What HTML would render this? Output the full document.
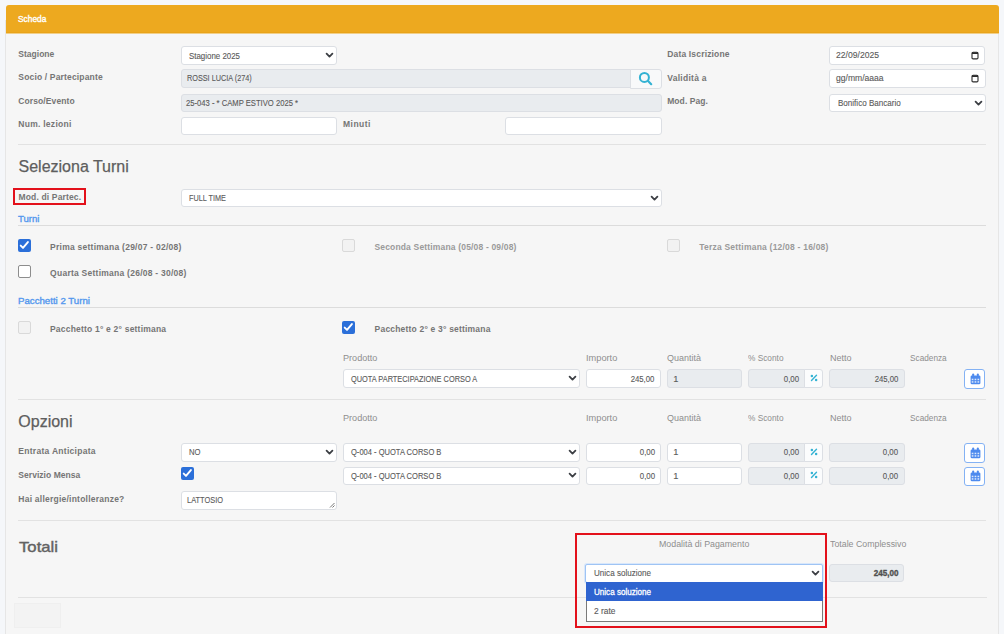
<!DOCTYPE html>
<html><head><meta charset="utf-8"><style>
html,body{margin:0;padding:0;width:1004px;height:634px;overflow:hidden;background:#f5f7fa;font-family:'Liberation Sans', sans-serif;}
</style></head><body>
<div style="position:absolute;left:5px;top:20px;width:994px;height:681px;background:#f6f6f6;border:1px solid #e6e6e6;border-radius:0;box-sizing:border-box;"></div>
<div style="position:absolute;left:6px;top:5px;width:993px;height:28px;background:#eda91f;border-radius:3px 3px 0 0"></div>
<div style="position:absolute;left:6px;top:32px;width:993px;height:1px;background:#e9a31a;border-radius:0;box-sizing:border-box;"></div>
<div style="position:absolute;left:6px;top:33px;width:993px;height:1px;background:#f1cf88;border-radius:0;box-sizing:border-box;"></div>
<div style="position:absolute;left:181px;top:46px;width:156px;height:19px;background:#fff;border:1px solid #dcdfe4;border-radius:3px;box-sizing:border-box;"></div>
<svg style="position:absolute;left:325.0px;top:51.9px" width="9" height="7" viewBox="0 0 9 7"><path d="M1.6 1.7 L4.5 4.6 L7.4 1.7" fill="none" stroke="#3b3e43" stroke-width="1.8" stroke-linecap="round" stroke-linejoin="round"/></svg>
<div style="position:absolute;left:829px;top:46px;width:156px;height:19px;background:#fff;border:1px solid #dcdfe4;border-radius:3px;box-sizing:border-box;"></div>
<svg style="position:absolute;left:970.8px;top:50.8px" width="8" height="9" viewBox="0 0 8 9"><rect x="1" y="1.3" width="6" height="6.6" rx="1.1" fill="none" stroke="#2a2a2a" stroke-width="1.1"/><rect x="1" y="1.3" width="6" height="1.7" fill="#2a2a2a"/></svg>
<div style="position:absolute;left:181px;top:69px;width:451px;height:19px;background:#e9ecef;border:1px solid #dcdfe4;border-radius:3px 0 0 3px;box-sizing:border-box;"></div>
<div style="position:absolute;left:630px;top:69px;width:32px;height:20px;background:#f8f9fa;border:1px solid #dcdfe4;border-radius:0 3px 3px 0;box-sizing:border-box;"></div>
<svg style="position:absolute;left:637px;top:70px" width="18" height="18" viewBox="0 0 18 18"><circle cx="7.4" cy="7.4" r="4.5" fill="none" stroke="#33b2d3" stroke-width="2"/><path d="M10.8 10.8 L14.2 14.2" stroke="#33b2d3" stroke-width="2.2" stroke-linecap="round"/></svg>
<div style="position:absolute;left:829px;top:69px;width:157px;height:19px;background:#fff;border:1px solid #dcdfe4;border-radius:3px;box-sizing:border-box;"></div>
<svg style="position:absolute;left:970.8px;top:73.8px" width="8" height="9" viewBox="0 0 8 9"><rect x="1" y="1.3" width="6" height="6.6" rx="1.1" fill="none" stroke="#2a2a2a" stroke-width="1.1"/><rect x="1" y="1.3" width="6" height="1.7" fill="#2a2a2a"/></svg>
<div style="position:absolute;left:181px;top:94px;width:481px;height:18px;background:#e9ecef;border:1px solid #dcdfe4;border-radius:3px;box-sizing:border-box;"></div>
<div style="position:absolute;left:829px;top:94px;width:157px;height:18px;background:#fff;border:1px solid #dcdfe4;border-radius:3px;box-sizing:border-box;"></div>
<svg style="position:absolute;left:974.0px;top:99.7px" width="9" height="7" viewBox="0 0 9 7"><path d="M1.6 1.7 L4.5 4.6 L7.4 1.7" fill="none" stroke="#3b3e43" stroke-width="1.8" stroke-linecap="round" stroke-linejoin="round"/></svg>
<div style="position:absolute;left:181px;top:117px;width:156px;height:18px;background:#fff;border:1px solid #dcdfe4;border-radius:3px;box-sizing:border-box;"></div>
<div style="position:absolute;left:505px;top:117px;width:157px;height:18px;background:#fff;border:1px solid #dcdfe4;border-radius:3px;box-sizing:border-box;"></div>
<div style="position:absolute;left:18px;top:144px;width:968px;height:1px;background:#e2e2e2;border-radius:0;box-sizing:border-box;"></div>
<div style="position:absolute;left:181px;top:189px;width:481px;height:18px;background:#fff;border:1px solid #dcdfe4;border-radius:3px;box-sizing:border-box;"></div>
<svg style="position:absolute;left:649.7px;top:194.5px" width="9" height="7" viewBox="0 0 9 7"><path d="M1.6 1.7 L4.5 4.6 L7.4 1.7" fill="none" stroke="#3b3e43" stroke-width="1.8" stroke-linecap="round" stroke-linejoin="round"/></svg>
<div style="position:absolute;left:18px;top:225px;width:968px;height:1px;background:#dcdcdc;border-radius:0;box-sizing:border-box;"></div>
<div style="position:absolute;left:18px;top:239px;width:13px;height:13px;background:#2b6fd9;border-radius:2px"></div><svg style="position:absolute;left:18px;top:239px" width="13" height="13" viewBox="0 0 13 13"><path d="M2.7 6.6 L5 8.9 L9.9 3.1" fill="none" stroke="#fff" stroke-width="1.9" stroke-linecap="round" stroke-linejoin="round"/></svg>
<div style="position:absolute;left:342px;top:239px;width:13px;height:13px;background:#f2f2f2;border:1px solid #d9d9d9;border-radius:2px;box-sizing:border-box;"></div>
<div style="position:absolute;left:667px;top:239px;width:13px;height:13px;background:#f2f2f2;border:1px solid #d9d9d9;border-radius:2px;box-sizing:border-box;"></div>
<div style="position:absolute;left:18px;top:265px;width:13px;height:13px;background:#fff;border:1px solid #8d8d8d;border-radius:2px;box-sizing:border-box;"></div>
<div style="position:absolute;left:18px;top:307px;width:968px;height:1px;background:#dcdcdc;border-radius:0;box-sizing:border-box;"></div>
<div style="position:absolute;left:18px;top:321px;width:13px;height:13px;background:#f2f2f2;border:1px solid #d9d9d9;border-radius:2px;box-sizing:border-box;"></div>
<div style="position:absolute;left:342px;top:321px;width:13px;height:13px;background:#2b6fd9;border-radius:2px"></div><svg style="position:absolute;left:342px;top:321px" width="13" height="13" viewBox="0 0 13 13"><path d="M2.7 6.6 L5 8.9 L9.9 3.1" fill="none" stroke="#fff" stroke-width="1.9" stroke-linecap="round" stroke-linejoin="round"/></svg>
<div style="position:absolute;left:343px;top:369px;width:237px;height:19px;background:#fff;border:1px solid #dcdfe4;border-radius:3px;box-sizing:border-box;"></div>
<svg style="position:absolute;left:568.1px;top:374.9px" width="9" height="7" viewBox="0 0 9 7"><path d="M1.6 1.7 L4.5 4.6 L7.4 1.7" fill="none" stroke="#3b3e43" stroke-width="1.8" stroke-linecap="round" stroke-linejoin="round"/></svg>
<div style="position:absolute;left:586px;top:369px;width:75px;height:19px;background:#fff;border:1px solid #dcdfe4;border-radius:3px;box-sizing:border-box;"></div>
<div style="position:absolute;left:667px;top:369px;width:75px;height:19px;background:#e9ecef;border:1px solid #dcdfe4;border-radius:3px;box-sizing:border-box;"></div>
<div style="position:absolute;left:748px;top:369px;width:58px;height:19px;background:#e9ecef;border:1px solid #dcdfe4;border-radius:3px 0 0 3px;box-sizing:border-box;"></div>
<div style="position:absolute;left:804px;top:369px;width:19px;height:19px;background:#fbfcfd;border:1px solid #dcdfe4;border-radius:0 3px 3px 0;box-sizing:border-box;"></div>
<svg style="position:absolute;left:809.8px;top:373.7px" width="8" height="8" viewBox="0 0 8 8"><circle cx="1.9" cy="1.9" r="1.25" fill="#33b2d3"/><circle cx="6.1" cy="6.1" r="1.25" fill="#33b2d3"/><path d="M6.5 1.3 L1.5 6.6" stroke="#33b2d3" stroke-width="1.4" stroke-linecap="round"/></svg>
<div style="position:absolute;left:829px;top:369px;width:76px;height:19px;background:#e9ecef;border:1px solid #dcdfe4;border-radius:3px;box-sizing:border-box;"></div>
<div style="position:absolute;left:964px;top:369px;width:21px;height:20px;background:#fff;border:1.7px solid #84b2f4;border-radius:3px;box-sizing:border-box;"></div>
<svg style="position:absolute;left:969.8px;top:372.8px" width="11" height="12" viewBox="0 0 11 12"><rect x="0.6" y="2.4" width="9.8" height="8.9" rx="1.4" fill="#4d8aee"/><rect x="2.2" y="0.4" width="1.9" height="3.4" rx="0.9" fill="#4d8aee"/><rect x="6.9" y="0.4" width="1.9" height="3.4" rx="0.9" fill="#4d8aee"/><rect x="1.7" y="5.7" width="1.7" height="1.5" fill="#dce8fc"/><rect x="1.7" y="8.2" width="1.7" height="1.5" fill="#dce8fc"/><rect x="4.6" y="5.7" width="1.7" height="1.5" fill="#dce8fc"/><rect x="4.6" y="8.2" width="1.7" height="1.5" fill="#dce8fc"/><rect x="7.5" y="5.7" width="1.7" height="1.5" fill="#dce8fc"/><rect x="7.5" y="8.2" width="1.7" height="1.5" fill="#dce8fc"/></svg>
<div style="position:absolute;left:18px;top:399px;width:968px;height:1px;background:#e2e2e2;border-radius:0;box-sizing:border-box;"></div>
<div style="position:absolute;left:181px;top:443px;width:156px;height:19px;background:#fff;border:1px solid #dcdfe4;border-radius:3px;box-sizing:border-box;"></div>
<svg style="position:absolute;left:324.8px;top:449.1px" width="9" height="7" viewBox="0 0 9 7"><path d="M1.6 1.7 L4.5 4.6 L7.4 1.7" fill="none" stroke="#3b3e43" stroke-width="1.8" stroke-linecap="round" stroke-linejoin="round"/></svg>
<div style="position:absolute;left:181px;top:467px;width:13px;height:13px;background:#2b6fd9;border-radius:2px"></div><svg style="position:absolute;left:181px;top:467px" width="13" height="13" viewBox="0 0 13 13"><path d="M2.7 6.6 L5 8.9 L9.9 3.1" fill="none" stroke="#fff" stroke-width="1.9" stroke-linecap="round" stroke-linejoin="round"/></svg>
<div style="position:absolute;left:181px;top:491px;width:156px;height:19px;background:#fff;border:1px solid #dcdfe4;border-radius:3px;box-sizing:border-box;"></div>
<svg style="position:absolute;left:328px;top:501px" width="8" height="8" viewBox="0 0 8 8"><path d="M6.5 2 L2 6.5 M6.5 4.5 L4.5 6.5" stroke="#666" stroke-width="0.9"/></svg>
<div style="position:absolute;left:343px;top:443px;width:237px;height:19px;background:#fff;border:1px solid #dcdfe4;border-radius:3px;box-sizing:border-box;"></div>
<svg style="position:absolute;left:568.1px;top:448.9px" width="9" height="7" viewBox="0 0 9 7"><path d="M1.6 1.7 L4.5 4.6 L7.4 1.7" fill="none" stroke="#3b3e43" stroke-width="1.8" stroke-linecap="round" stroke-linejoin="round"/></svg>
<div style="position:absolute;left:586px;top:443px;width:75px;height:19px;background:#fff;border:1px solid #dcdfe4;border-radius:3px;box-sizing:border-box;"></div>
<div style="position:absolute;left:667px;top:443px;width:75px;height:19px;background:#fff;border:1px solid #dcdfe4;border-radius:3px;box-sizing:border-box;"></div>
<div style="position:absolute;left:748px;top:443px;width:58px;height:19px;background:#e9ecef;border:1px solid #dcdfe4;border-radius:3px 0 0 3px;box-sizing:border-box;"></div>
<div style="position:absolute;left:804px;top:443px;width:19px;height:19px;background:#fbfcfd;border:1px solid #dcdfe4;border-radius:0 3px 3px 0;box-sizing:border-box;"></div>
<svg style="position:absolute;left:809.8px;top:447.7px" width="8" height="8" viewBox="0 0 8 8"><circle cx="1.9" cy="1.9" r="1.25" fill="#33b2d3"/><circle cx="6.1" cy="6.1" r="1.25" fill="#33b2d3"/><path d="M6.5 1.3 L1.5 6.6" stroke="#33b2d3" stroke-width="1.4" stroke-linecap="round"/></svg>
<div style="position:absolute;left:829px;top:443px;width:76px;height:19px;background:#e9ecef;border:1px solid #dcdfe4;border-radius:3px;box-sizing:border-box;"></div>
<div style="position:absolute;left:964px;top:443px;width:21px;height:20px;background:#fff;border:1.7px solid #84b2f4;border-radius:3px;box-sizing:border-box;"></div>
<svg style="position:absolute;left:969.8px;top:446.8px" width="11" height="12" viewBox="0 0 11 12"><rect x="0.6" y="2.4" width="9.8" height="8.9" rx="1.4" fill="#4d8aee"/><rect x="2.2" y="0.4" width="1.9" height="3.4" rx="0.9" fill="#4d8aee"/><rect x="6.9" y="0.4" width="1.9" height="3.4" rx="0.9" fill="#4d8aee"/><rect x="1.7" y="5.7" width="1.7" height="1.5" fill="#dce8fc"/><rect x="1.7" y="8.2" width="1.7" height="1.5" fill="#dce8fc"/><rect x="4.6" y="5.7" width="1.7" height="1.5" fill="#dce8fc"/><rect x="4.6" y="8.2" width="1.7" height="1.5" fill="#dce8fc"/><rect x="7.5" y="5.7" width="1.7" height="1.5" fill="#dce8fc"/><rect x="7.5" y="8.2" width="1.7" height="1.5" fill="#dce8fc"/></svg>
<div style="position:absolute;left:343px;top:467px;width:237px;height:18px;background:#fff;border:1px solid #dcdfe4;border-radius:3px;box-sizing:border-box;"></div>
<svg style="position:absolute;left:568.1px;top:472.4px" width="9" height="7" viewBox="0 0 9 7"><path d="M1.6 1.7 L4.5 4.6 L7.4 1.7" fill="none" stroke="#3b3e43" stroke-width="1.8" stroke-linecap="round" stroke-linejoin="round"/></svg>
<div style="position:absolute;left:586px;top:467px;width:75px;height:18px;background:#fff;border:1px solid #dcdfe4;border-radius:3px;box-sizing:border-box;"></div>
<div style="position:absolute;left:667px;top:467px;width:75px;height:18px;background:#fff;border:1px solid #dcdfe4;border-radius:3px;box-sizing:border-box;"></div>
<div style="position:absolute;left:748px;top:467px;width:58px;height:18px;background:#e9ecef;border:1px solid #dcdfe4;border-radius:3px 0 0 3px;box-sizing:border-box;"></div>
<div style="position:absolute;left:804px;top:467px;width:19px;height:18px;background:#fbfcfd;border:1px solid #dcdfe4;border-radius:0 3px 3px 0;box-sizing:border-box;"></div>
<svg style="position:absolute;left:809.8px;top:471.2px" width="8" height="8" viewBox="0 0 8 8"><circle cx="1.9" cy="1.9" r="1.25" fill="#33b2d3"/><circle cx="6.1" cy="6.1" r="1.25" fill="#33b2d3"/><path d="M6.5 1.3 L1.5 6.6" stroke="#33b2d3" stroke-width="1.4" stroke-linecap="round"/></svg>
<div style="position:absolute;left:829px;top:467px;width:76px;height:18px;background:#e9ecef;border:1px solid #dcdfe4;border-radius:3px;box-sizing:border-box;"></div>
<div style="position:absolute;left:964px;top:467px;width:21px;height:19px;background:#fff;border:1.7px solid #84b2f4;border-radius:3px;box-sizing:border-box;"></div>
<svg style="position:absolute;left:969.8px;top:470.3px" width="11" height="12" viewBox="0 0 11 12"><rect x="0.6" y="2.4" width="9.8" height="8.9" rx="1.4" fill="#4d8aee"/><rect x="2.2" y="0.4" width="1.9" height="3.4" rx="0.9" fill="#4d8aee"/><rect x="6.9" y="0.4" width="1.9" height="3.4" rx="0.9" fill="#4d8aee"/><rect x="1.7" y="5.7" width="1.7" height="1.5" fill="#dce8fc"/><rect x="1.7" y="8.2" width="1.7" height="1.5" fill="#dce8fc"/><rect x="4.6" y="5.7" width="1.7" height="1.5" fill="#dce8fc"/><rect x="4.6" y="8.2" width="1.7" height="1.5" fill="#dce8fc"/><rect x="7.5" y="5.7" width="1.7" height="1.5" fill="#dce8fc"/><rect x="7.5" y="8.2" width="1.7" height="1.5" fill="#dce8fc"/></svg>
<div style="position:absolute;left:18px;top:520px;width:968px;height:1px;background:#e2e2e2;border-radius:0;box-sizing:border-box;"></div>
<div style="position:absolute;left:18px;top:597px;width:969px;height:1px;background:#e2e2e2;border-radius:0;box-sizing:border-box;"></div>
<div style="position:absolute;left:585px;top:564px;width:238px;height:19px;background:#fff;border:1px solid #9fc4f4;border-radius:2px;box-sizing:border-box;box-shadow:0 0 0 1px #d8e7fb;"></div>
<svg style="position:absolute;left:811.0px;top:570.0px" width="9" height="7" viewBox="0 0 9 7"><path d="M1.6 1.7 L4.5 4.6 L7.4 1.7" fill="none" stroke="#3b3e43" stroke-width="1.8" stroke-linecap="round" stroke-linejoin="round"/></svg>
<div style="position:absolute;left:586px;top:582px;width:237px;height:40px;background:#fff;border:1px solid #7a7a7a;border-radius:0;box-sizing:border-box;border-top:none;"></div>
<div style="position:absolute;left:586px;top:582px;width:237px;height:19px;background:#2f64d0;border-radius:0;box-sizing:border-box;"></div>
<div style="position:absolute;left:829px;top:564px;width:75px;height:18px;background:#e9ecef;border:1px solid #dcdfe4;border-radius:3px;box-sizing:border-box;"></div>
<div style="position:absolute;left:14px;top:603px;width:47px;height:25px;background:#f3f3f3;border:1px solid #efefef;border-radius:0;box-sizing:border-box;"></div>
<div style="position:absolute;left:18.00px;top:14.80px;font-size:8.5px;line-height:8.5px;font-weight:normal;color:#fff;white-space:nowrap;-webkit-text-stroke:0.35px #fff;transform:scaleX(0.9846);transform-origin:0 0;">Scheda</div>
<div style="position:absolute;left:18.30px;top:49.80px;font-size:8.5px;line-height:8.5px;font-weight:bold;color:#757575;white-space:nowrap;letter-spacing:0.013px;">Stagione</div>
<div style="position:absolute;left:18.30px;top:73.30px;font-size:8.5px;line-height:8.5px;font-weight:bold;color:#757575;white-space:nowrap;letter-spacing:0.166px;">Socio / Partecipante</div>
<div style="position:absolute;left:18.30px;top:97.20px;font-size:8.5px;line-height:8.5px;font-weight:bold;color:#757575;white-space:nowrap;letter-spacing:0.103px;">Corso/Evento</div>
<div style="position:absolute;left:18.30px;top:120.20px;font-size:8.5px;line-height:8.5px;font-weight:bold;color:#757575;white-space:nowrap;letter-spacing:0.267px;">Num. lezioni</div>
<div style="position:absolute;left:343.00px;top:120.20px;font-size:8.5px;line-height:8.5px;font-weight:bold;color:#757575;white-space:nowrap;letter-spacing:0.474px;">Minuti</div>
<div style="position:absolute;left:667.20px;top:49.80px;font-size:8.5px;line-height:8.5px;font-weight:bold;color:#757575;white-space:nowrap;letter-spacing:0.171px;">Data Iscrizione</div>
<div style="position:absolute;left:667.20px;top:73.70px;font-size:8.5px;line-height:8.5px;font-weight:bold;color:#757575;white-space:nowrap;letter-spacing:0.282px;">Validità a</div>
<div style="position:absolute;left:667.20px;top:97.30px;font-size:8.5px;line-height:8.5px;font-weight:bold;color:#757575;white-space:nowrap;letter-spacing:0.082px;">Mod. Pag.</div>
<div style="position:absolute;left:188.80px;top:51.93px;font-size:9.3px;line-height:9.3px;font-weight:normal;color:#5a5a5a;white-space:nowrap;-webkit-text-stroke:0.12px #5a5a5a;transform:scaleX(0.8504);transform-origin:0 0;">Stagione 2025</div>
<div style="position:absolute;left:836.00px;top:51.23px;font-size:9.3px;line-height:9.3px;font-weight:normal;color:#5a5a5a;white-space:nowrap;-webkit-text-stroke:0.12px #5a5a5a;transform:scaleX(0.9241);transform-origin:0 0;">22/09/2025</div>
<div style="position:absolute;left:186.50px;top:74.43px;font-size:9.3px;line-height:9.3px;font-weight:normal;color:#5a5a5a;white-space:nowrap;-webkit-text-stroke:0.12px #5a5a5a;transform:scaleX(0.7826);transform-origin:0 0;">ROSSI LUCIA (274)</div>
<div style="position:absolute;left:836.00px;top:74.23px;font-size:9.3px;line-height:9.3px;font-weight:normal;color:#5a5a5a;white-space:nowrap;-webkit-text-stroke:0.12px #5a5a5a;transform:scaleX(0.9209);transform-origin:0 0;">gg/mm/aaaa</div>
<div style="position:absolute;left:186.40px;top:98.93px;font-size:9.3px;line-height:9.3px;font-weight:normal;color:#5a5a5a;white-space:nowrap;-webkit-text-stroke:0.12px #5a5a5a;transform:scaleX(0.8220);transform-origin:0 0;">25-043 - * CAMP ESTIVO 2025 *</div>
<div style="position:absolute;left:838.00px;top:98.93px;font-size:9.3px;line-height:9.3px;font-weight:normal;color:#5a5a5a;white-space:nowrap;-webkit-text-stroke:0.12px #5a5a5a;transform:scaleX(0.8665);transform-origin:0 0;">Bonifico Bancario</div>
<div style="position:absolute;left:18.50px;top:159.45px;font-size:16px;line-height:16px;font-weight:normal;color:#5e5e5e;white-space:nowrap;-webkit-text-stroke:0.25px #5e5e5e;">Seleziona Turni</div>
<div style="position:absolute;left:18.50px;top:193.00px;font-size:8.5px;line-height:8.5px;font-weight:bold;color:#757575;white-space:nowrap;letter-spacing:0.152px;">Mod. di Partec.</div>
<div style="position:absolute;left:188.90px;top:193.93px;font-size:9.3px;line-height:9.3px;font-weight:normal;color:#5a5a5a;white-space:nowrap;-webkit-text-stroke:0.12px #5a5a5a;transform:scaleX(0.7870);transform-origin:0 0;">FULL TIME</div>
<div style="position:absolute;left:18.40px;top:214.98px;font-size:9px;line-height:9px;font-weight:normal;color:#5598ee;white-space:nowrap;-webkit-text-stroke:0.35px #5598ee;transform:scaleX(1.0658);transform-origin:0 0;">Turni</div>
<div style="position:absolute;left:50.10px;top:242.70px;font-size:8.5px;line-height:8.5px;font-weight:bold;color:#757575;white-space:nowrap;letter-spacing:0.247px;">Prima settimana (29/07 - 02/08)</div>
<div style="position:absolute;left:374.40px;top:242.70px;font-size:8.5px;line-height:8.5px;font-weight:bold;color:#9a9a9a;white-space:nowrap;letter-spacing:0.171px;">Seconda Settimana (05/08 - 09/08)</div>
<div style="position:absolute;left:699.20px;top:242.70px;font-size:8.5px;line-height:8.5px;font-weight:bold;color:#9a9a9a;white-space:nowrap;letter-spacing:0.217px;">Terza Settimana (12/08 - 16/08)</div>
<div style="position:absolute;left:50.10px;top:268.80px;font-size:8.5px;line-height:8.5px;font-weight:bold;color:#757575;white-space:nowrap;letter-spacing:0.251px;">Quarta Settimana (26/08 - 30/08)</div>
<div style="position:absolute;left:18.40px;top:296.68px;font-size:9px;line-height:9px;font-weight:normal;color:#5598ee;white-space:nowrap;-webkit-text-stroke:0.35px #5598ee;transform:scaleX(1.0739);transform-origin:0 0;">Pacchetti 2 Turni</div>
<div style="position:absolute;left:50.00px;top:324.80px;font-size:8.5px;line-height:8.5px;font-weight:bold;color:#757575;white-space:nowrap;letter-spacing:0.203px;">Pacchetto 1° e 2° settimana</div>
<div style="position:absolute;left:374.60px;top:324.80px;font-size:8.5px;line-height:8.5px;font-weight:bold;color:#757575;white-space:nowrap;letter-spacing:0.195px;">Pacchetto 2° e 3° settimana</div>
<div style="position:absolute;left:343.10px;top:353.80px;font-size:8.5px;line-height:8.5px;font-weight:normal;color:#8e8e8e;white-space:nowrap;transform:scaleX(1.0703);transform-origin:0 0;">Prodotto</div>
<div style="position:absolute;left:586.30px;top:353.80px;font-size:8.5px;line-height:8.5px;font-weight:normal;color:#8e8e8e;white-space:nowrap;transform:scaleX(1.0857);transform-origin:0 0;">Importo</div>
<div style="position:absolute;left:667.30px;top:353.80px;font-size:8.5px;line-height:8.5px;font-weight:normal;color:#8e8e8e;white-space:nowrap;transform:scaleX(1.0579);transform-origin:0 0;">Quantità</div>
<div style="position:absolute;left:748.40px;top:353.80px;font-size:8.5px;line-height:8.5px;font-weight:normal;color:#8e8e8e;white-space:nowrap;transform:scaleX(0.9755);transform-origin:0 0;">% Sconto</div>
<div style="position:absolute;left:829.60px;top:353.80px;font-size:8.5px;line-height:8.5px;font-weight:normal;color:#8e8e8e;white-space:nowrap;transform:scaleX(1.0626);transform-origin:0 0;">Netto</div>
<div style="position:absolute;left:910.40px;top:353.80px;font-size:8.5px;line-height:8.5px;font-weight:normal;color:#8e8e8e;white-space:nowrap;transform:scaleX(0.9706);transform-origin:0 0;">Scadenza</div>
<div style="position:absolute;left:350.90px;top:374.93px;font-size:9.3px;line-height:9.3px;font-weight:normal;color:#5a5a5a;white-space:nowrap;-webkit-text-stroke:0.12px #5a5a5a;transform:scaleX(0.7940);transform-origin:0 0;">QUOTA PARTECIPAZIONE CORSO A</div>
<div style="position:absolute;left:626.46px;top:374.93px;font-size:9.3px;line-height:9.3px;font-weight:normal;color:#5a5a5a;white-space:nowrap;-webkit-text-stroke:0.12px #5a5a5a;transform:scaleX(0.8369);transform-origin:100% 0;">245,00</div>
<div style="position:absolute;left:673.20px;top:374.93px;font-size:9.3px;line-height:9.3px;font-weight:normal;color:#5a5a5a;white-space:nowrap;-webkit-text-stroke:0.12px #5a5a5a;">1</div>
<div style="position:absolute;left:781.09px;top:374.93px;font-size:9.3px;line-height:9.3px;font-weight:normal;color:#5a5a5a;white-space:nowrap;-webkit-text-stroke:0.12px #5a5a5a;transform:scaleX(0.8449);transform-origin:100% 0;">0,00</div>
<div style="position:absolute;left:869.66px;top:374.93px;font-size:9.3px;line-height:9.3px;font-weight:normal;color:#5a5a5a;white-space:nowrap;-webkit-text-stroke:0.12px #5a5a5a;transform:scaleX(0.8369);transform-origin:100% 0;">245,00</div>
<div style="position:absolute;left:18.30px;top:414.45px;font-size:16px;line-height:16px;font-weight:normal;color:#5e5e5e;white-space:nowrap;-webkit-text-stroke:0.25px #5e5e5e;">Opzioni</div>
<div style="position:absolute;left:343.10px;top:414.30px;font-size:8.5px;line-height:8.5px;font-weight:normal;color:#8e8e8e;white-space:nowrap;transform:scaleX(1.0703);transform-origin:0 0;">Prodotto</div>
<div style="position:absolute;left:586.30px;top:414.30px;font-size:8.5px;line-height:8.5px;font-weight:normal;color:#8e8e8e;white-space:nowrap;transform:scaleX(1.0857);transform-origin:0 0;">Importo</div>
<div style="position:absolute;left:667.30px;top:414.30px;font-size:8.5px;line-height:8.5px;font-weight:normal;color:#8e8e8e;white-space:nowrap;transform:scaleX(1.0579);transform-origin:0 0;">Quantità</div>
<div style="position:absolute;left:748.40px;top:414.30px;font-size:8.5px;line-height:8.5px;font-weight:normal;color:#8e8e8e;white-space:nowrap;transform:scaleX(0.9755);transform-origin:0 0;">% Sconto</div>
<div style="position:absolute;left:829.60px;top:414.30px;font-size:8.5px;line-height:8.5px;font-weight:normal;color:#8e8e8e;white-space:nowrap;transform:scaleX(1.0626);transform-origin:0 0;">Netto</div>
<div style="position:absolute;left:910.40px;top:414.30px;font-size:8.5px;line-height:8.5px;font-weight:normal;color:#8e8e8e;white-space:nowrap;transform:scaleX(0.9706);transform-origin:0 0;">Scadenza</div>
<div style="position:absolute;left:18.30px;top:447.00px;font-size:8.5px;line-height:8.5px;font-weight:bold;color:#757575;white-space:nowrap;letter-spacing:0.287px;">Entrata Anticipata</div>
<div style="position:absolute;left:18.30px;top:470.50px;font-size:8.5px;line-height:8.5px;font-weight:bold;color:#757575;white-space:nowrap;letter-spacing:0.044px;">Servizio Mensa</div>
<div style="position:absolute;left:18.30px;top:494.50px;font-size:8.5px;line-height:8.5px;font-weight:bold;color:#757575;white-space:nowrap;letter-spacing:0.234px;">Hai allergie/intolleranze?</div>
<div style="position:absolute;left:188.90px;top:448.13px;font-size:9.3px;line-height:9.3px;font-weight:normal;color:#5a5a5a;white-space:nowrap;-webkit-text-stroke:0.12px #5a5a5a;transform:scaleX(0.8242);transform-origin:0 0;">NO</div>
<div style="position:absolute;left:186.50px;top:495.83px;font-size:9.3px;line-height:9.3px;font-weight:normal;color:#5a5a5a;white-space:nowrap;-webkit-text-stroke:0.12px #5a5a5a;transform:scaleX(0.7978);transform-origin:0 0;">LATTOSIO</div>
<div style="position:absolute;left:350.90px;top:448.23px;font-size:9.3px;line-height:9.3px;font-weight:normal;color:#5a5a5a;white-space:nowrap;-webkit-text-stroke:0.12px #5a5a5a;transform:scaleX(0.8113);transform-origin:0 0;">Q-004 - QUOTA CORSO B</div>
<div style="position:absolute;left:636.79px;top:448.23px;font-size:9.3px;line-height:9.3px;font-weight:normal;color:#5a5a5a;white-space:nowrap;-webkit-text-stroke:0.12px #5a5a5a;transform:scaleX(0.8449);transform-origin:100% 0;">0,00</div>
<div style="position:absolute;left:673.20px;top:448.23px;font-size:9.3px;line-height:9.3px;font-weight:normal;color:#5a5a5a;white-space:nowrap;-webkit-text-stroke:0.12px #5a5a5a;">1</div>
<div style="position:absolute;left:781.09px;top:448.23px;font-size:9.3px;line-height:9.3px;font-weight:normal;color:#5a5a5a;white-space:nowrap;-webkit-text-stroke:0.12px #5a5a5a;transform:scaleX(0.8449);transform-origin:100% 0;">0,00</div>
<div style="position:absolute;left:879.99px;top:448.23px;font-size:9.3px;line-height:9.3px;font-weight:normal;color:#5a5a5a;white-space:nowrap;-webkit-text-stroke:0.12px #5a5a5a;transform:scaleX(0.8449);transform-origin:100% 0;">0,00</div>
<div style="position:absolute;left:350.90px;top:472.23px;font-size:9.3px;line-height:9.3px;font-weight:normal;color:#5a5a5a;white-space:nowrap;-webkit-text-stroke:0.12px #5a5a5a;transform:scaleX(0.8113);transform-origin:0 0;">Q-004 - QUOTA CORSO B</div>
<div style="position:absolute;left:636.79px;top:472.23px;font-size:9.3px;line-height:9.3px;font-weight:normal;color:#5a5a5a;white-space:nowrap;-webkit-text-stroke:0.12px #5a5a5a;transform:scaleX(0.8449);transform-origin:100% 0;">0,00</div>
<div style="position:absolute;left:673.20px;top:472.23px;font-size:9.3px;line-height:9.3px;font-weight:normal;color:#5a5a5a;white-space:nowrap;-webkit-text-stroke:0.12px #5a5a5a;">1</div>
<div style="position:absolute;left:781.09px;top:472.23px;font-size:9.3px;line-height:9.3px;font-weight:normal;color:#5a5a5a;white-space:nowrap;-webkit-text-stroke:0.12px #5a5a5a;transform:scaleX(0.8449);transform-origin:100% 0;">0,00</div>
<div style="position:absolute;left:879.99px;top:472.23px;font-size:9.3px;line-height:9.3px;font-weight:normal;color:#5a5a5a;white-space:nowrap;-webkit-text-stroke:0.12px #5a5a5a;transform:scaleX(0.8449);transform-origin:100% 0;">0,00</div>
<div style="position:absolute;left:18.70px;top:538.80px;font-size:15px;line-height:15px;font-weight:normal;color:#626262;white-space:nowrap;-webkit-text-stroke:0.4px #626262;transform:scaleX(1.1133);transform-origin:0 0;">Totali</div>
<div style="position:absolute;left:659.30px;top:540.10px;font-size:8.5px;line-height:8.5px;font-weight:normal;color:#8e8e8e;white-space:nowrap;transform:scaleX(1.0385);transform-origin:0 0;">Modalità di Pagamento</div>
<div style="position:absolute;left:829.50px;top:539.70px;font-size:8.5px;line-height:8.5px;font-weight:normal;color:#8e8e8e;white-space:nowrap;transform:scaleX(1.0352);transform-origin:0 0;">Totale Complessivo</div>
<div style="position:absolute;left:594.30px;top:568.93px;font-size:9.3px;line-height:9.3px;font-weight:normal;color:#5a5a5a;white-space:nowrap;-webkit-text-stroke:0.12px #5a5a5a;transform:scaleX(0.8684);transform-origin:0 0;">Unica soluzione</div>
<div style="position:absolute;left:594.30px;top:588.23px;font-size:9.3px;line-height:9.3px;font-weight:normal;color:#fff;white-space:nowrap;-webkit-text-stroke:0.3px #fff;transform:scaleX(0.8684);transform-origin:0 0;">Unica soluzione</div>
<div style="position:absolute;left:594.30px;top:607.13px;font-size:9.3px;line-height:9.3px;font-weight:normal;color:#5a5a5a;white-space:nowrap;-webkit-text-stroke:0.12px #5a5a5a;transform:scaleX(0.9041);transform-origin:0 0;">2 rate</div>
<div style="position:absolute;left:870.87px;top:568.68px;font-size:9px;line-height:9px;font-weight:bold;color:#505050;white-space:nowrap;-webkit-text-stroke:0.35px #505050;transform:scaleX(0.8972);transform-origin:100% 0;">245,00</div>
<div style="position:absolute;left:12.5px;top:188.2px;width:73.5px;height:16.5px;border:2px solid #e3111b;box-sizing:border-box"></div>
<div style="position:absolute;left:575.3px;top:532.8px;width:251.8px;height:95.4px;border:2px solid #e3111b;box-sizing:border-box"></div>
</body></html>
